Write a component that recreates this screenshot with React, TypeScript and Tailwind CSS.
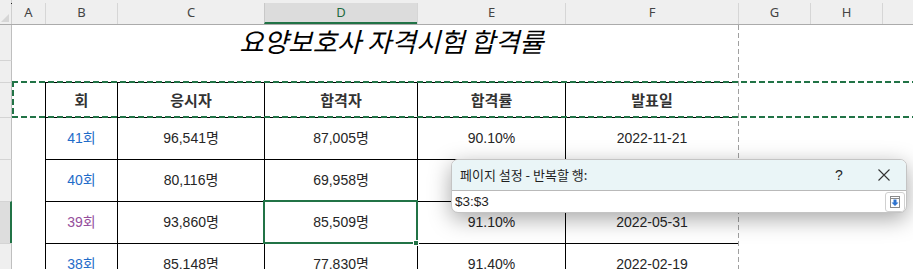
import React from "react";

const rows = [
  { n: "41회", purple: false, a: "96,541명", p: "87,005명", r: "90.10%", d: "2022-11-21" },
  { n: "40회", purple: false, a: "80,116명", p: "69,958명", r: "87.32%", d: "2022-08-29" },
  { n: "39회", purple: true, a: "93,860명", p: "85,509명", r: "91.10%", d: "2022-05-31" },
  { n: "38회", purple: false, a: "85,148명", p: "77,830명", r: "91.40%", d: "2022-02-19" },
];

function RowHead({ first, sel }: { first?: boolean; sel?: boolean }) {
  return (
    <div
      className={
        "w-[12px] shrink-0 " +
        (first ? "" : "border-t border-t-[#d4d4d4] ") +
        (sel
          ? "bg-[#dddddd] border-r-2 border-r-[#217346]"
          : "bg-[#efefef] border-r border-r-[#bfbfbf]")
      }
    />
  );
}

const tcell = "shrink-0 flex items-center justify-center border-l border-t border-black";

export default function App() {
  return (
    <div className="relative w-[913px] h-[269px] overflow-hidden bg-white font-['Liberation_Sans','Noto_Sans_CJK_KR',sans-serif] text-[#262626]">
      <div className="flex flex-col">
        {/* column header */}
        <div className="flex h-[25px] bg-[#efefef] border-b border-[#ababab] font-['Noto_Sans',sans-serif] text-[13px] text-[#444]">
          <div className="relative w-[12px] shrink-0 border-r border-[#cfcfcf]">
            <div className="absolute right-[2px] bottom-[2px] w-0 h-0 border-l-[8px] border-l-transparent border-b-[8px] border-b-[#d6d6d6]" />
            <div className="absolute left-[11px] top-[3px] w-[1px] h-[1px] bg-[#222]" />
          </div>
          <div className="w-[33px] shrink-0 flex items-center justify-center pt-[1px]">A</div>
          <div className="w-[72px] shrink-0 flex items-center justify-center border-l border-[#d6d6d6] mt-[3px] pb-[2px]">B</div>
          <div className="w-[147px] shrink-0 flex items-center justify-center border-l border-[#d6d6d6] mt-[3px] pb-[2px]">C</div>
          <div className="w-[153px] shrink-0 flex items-center justify-center border-l border-[#c8c8c8] mt-[3px] bg-[#dcdcdc] border-b-2 border-b-[#217346] text-[#1e6b3f]">D</div>
          <div className="w-[148px] shrink-0 flex items-center justify-center border-l border-[#d6d6d6] mt-[3px] pb-[2px]">E</div>
          <div className="w-[173px] shrink-0 flex items-center justify-center border-l border-[#d6d6d6] mt-[3px] pb-[2px]">F</div>
          <div className="w-[72px] shrink-0 flex items-center justify-center border-l border-[#d6d6d6] mt-[3px] pb-[2px]">G</div>
          <div className="w-[72px] shrink-0 flex items-center justify-center border-l border-[#d6d6d6] mt-[3px] pb-[2px]">H</div>
          <div className="flex-1 border-l border-[#d6d6d6] mt-[3px]" />
        </div>

        {/* row 1: title */}
        <div className="flex h-[35px]">
          <RowHead first />
          <div className="w-[33px] shrink-0" />
          <div className="w-[693px] shrink-0 flex items-center justify-center pb-[4px] text-[26.5px] italic text-black font-['Noto_Sans_CJK_KR',sans-serif] whitespace-nowrap">
            요양보호사 자격시험 합격률
          </div>
          <div className="flex-1" />
        </div>

        {/* row 2 */}
        <div className="flex h-[22px]">
          <RowHead />
          <div className="flex-1" />
        </div>

        {/* row 3: headers */}
        <div className="flex h-[35px] font-bold text-[15px] text-[#333] font-['Noto_Sans_CJK_KR',sans-serif]">
          <RowHead />
          <div className="w-[33px] shrink-0" />
          <div className={tcell + " w-[72px]"}>회</div>
          <div className={tcell + " w-[147px]"}>응시자</div>
          <div className={tcell + " w-[153px]"}>합격자</div>
          <div className={tcell + " w-[148px]"}>합격률</div>
          <div className={tcell + " w-[173px]"}>발표일</div>
          <div className="flex-1" />
        </div>

        {rows.map((r, i) => (
          <div key={i} className="flex h-[42px] text-[14px]">
            <RowHead sel={i === 2} />
            <div className="w-[33px] shrink-0" />
            <div className={tcell + " w-[72px] " + (r.purple ? "text-[#954f9c]" : "text-[#1f6cc9]")}>{r.n}</div>
            <div className={tcell + " w-[147px]"}>{r.a}</div>
            <div className={tcell + " w-[153px]"}>{r.p}</div>
            <div className={tcell + " w-[148px]"}>{r.r}</div>
            <div className={tcell + " w-[173px]"}>{r.d}</div>
            <div className="flex-1" />
          </div>
        ))}
      </div>

      {/* page break line */}
      <div className="absolute left-[738px] top-[25px] w-[1px] h-[250px] bg-[repeating-linear-gradient(180deg,#a0a0a0_0_5px,transparent_5px_8px)]" />

      {/* marquee */}
      <div className="absolute left-[12px] top-[81px] w-[901px] h-[2px] bg-[repeating-linear-gradient(90deg,#217346_0_6px,transparent_6px_9px)]" />
      <div className="absolute left-[12px] top-[116px] w-[901px] h-[2px] bg-[repeating-linear-gradient(90deg,#217346_0_6px,transparent_6px_9px)]" />
      <div className="absolute left-[12px] top-[81px] w-[2px] h-[37px] bg-[repeating-linear-gradient(180deg,#217346_0_6px,transparent_6px_9px)]" />

      {/* selected cell */}
      <div className="absolute left-[263px] top-[200px] w-[155px] h-[44px] border-2 border-[#217346]" />
      <div className="absolute left-[413px] top-[240px] w-[6px] h-[6px] bg-[#217346] border border-white" />

      {/* dialog */}
      <div className="absolute left-[451px] top-[159px] w-[456px] h-[54px] rounded-[7px] border border-[#c4c4c4] bg-white shadow-[0_6px_22px_rgba(0,0,0,0.35)] overflow-hidden font-['Noto_Sans_CJK_KR',sans-serif]">
        <div className="flex items-center h-[31px] bg-[#eaf5f7] border-b border-[#b9b9b9] pl-[8px] pr-[12px] text-[13px] text-[#1f1f1f]">
          <span className="flex-1">페이지 설정 - 반복할 행:</span>
          <span className="w-[14px] text-center text-[14px] font-['Liberation_Sans',sans-serif] mr-[32px]">?</span>
          <svg width="12" height="12" viewBox="0 0 12 12" className="mr-[4px]">
            <path d="M0.5 0.5 L11.5 11.5 M11.5 0.5 L0.5 11.5" stroke="#333" strokeWidth="1.1" fill="none" />
          </svg>
        </div>
        <div className="flex items-center h-[22px] pl-[3px] pr-[1px] text-[13.5px] font-['Liberation_Sans',sans-serif] text-[#1f1f1f]">
          <span className="flex-1">$3:$3</span>
          <div className="w-[20px] h-[20px] rounded-[3px] border border-[#d0d0d0] bg-white flex items-center justify-center">
            <svg width="10" height="12" viewBox="0 0 10 12">
              <rect x="0.5" y="0.5" width="9" height="11" fill="white" stroke="#8a8a8a" />
              <line x1="0.5" y1="2.5" x2="9.5" y2="2.5" stroke="#8a8a8a" />
              <path d="M3.5 3.5 H6.5 V6.5 H8.5 L5 10 L1.5 6.5 H3.5 Z" fill="#2f74cf" />
            </svg>
          </div>
        </div>
      </div>
    </div>
  );
}
